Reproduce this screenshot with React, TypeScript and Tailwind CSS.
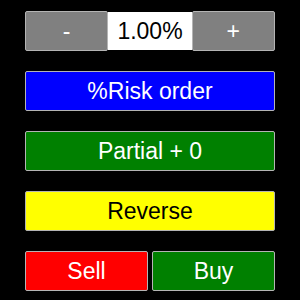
import React from "react";

const font = { fontFamily: '"Liberation Sans", Arial, sans-serif' };

function Btn({ bg, text, label, className = "" }: { bg: string; text: string; label: string; className?: string }) {
  return (
    <div
      className={`flex h-[40px] items-center justify-center rounded-[2px] border border-[#b4b4b4] text-[23px] leading-none ${bg} ${text} ${className}`}
    >
      {label}
    </div>
  );
}

export default function App() {
  return (
    <div className="h-[300px] w-[300px] bg-black pt-[11px]" style={font}>
      <div className="mx-[25px] flex w-[250px] flex-col gap-[20px]">
        <div className="grid h-[40px] grid-cols-3">
          <Btn bg="bg-[#808080]" text="text-white" label="-" />
          <div className="my-px flex items-center justify-center bg-white text-[23px] leading-none text-black">1.00%</div>
          <Btn bg="bg-[#808080]" text="text-white" label="+" />
        </div>
        <Btn bg="bg-[#0000ff]" text="text-white" label="%Risk order" />
        <Btn bg="bg-[#008000]" text="text-white" label="Partial + 0" />
        <Btn bg="bg-[#ffff00]" text="text-black" label="Reverse" />
        <div className="flex gap-[4px]">
          <Btn bg="bg-[#ff0000]" text="text-white" label="Sell" className="flex-1" />
          <Btn bg="bg-[#008000]" text="text-white" label="Buy" className="flex-1" />
        </div>
      </div>
    </div>
  );
}
